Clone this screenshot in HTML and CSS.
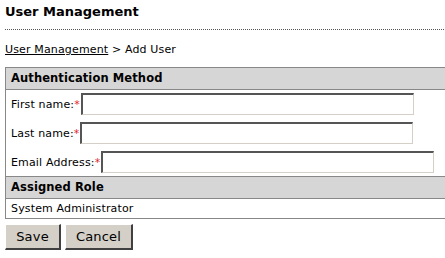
FILE: index.html
```html
<!DOCTYPE html>
<html lang="en">
<head>
    <meta charset="UTF-8">
    <title>User Management</title>
    <link rel="stylesheet" href="styles.css">
</head>
<body>
    <div class="page">
        <h1 class="title">User Management</h1>
        <div class="crumbs"><a href="#">User Management</a> &gt; Add User</div>
        <form class="form">
            <div class="section">
                <div class="section-head">Authentication Method</div>
                <div class="fields">
                    <div class="field">
                        <label for="first">First name:<span class="req">*</span></label>
                        <input type="text" id="first" class="input">
                    </div>
                    <div class="field">
                        <label for="last">Last name:<span class="req">*</span></label>
                        <input type="text" id="last" class="input">
                    </div>
                    <div class="field">
                        <label for="email">Email Address:<span class="req">*</span></label>
                        <input type="text" id="email" class="input">
                    </div>
                </div>
                <div class="section-head second">Assigned Role</div>
                <div class="role">System Administrator</div>
            </div>
            <div class="buttons">
                <button type="button" class="btn save">Save</button>
                <button type="button" class="btn cancel">Cancel</button>
            </div>
        </form>
    </div>
</body>
</html>
```

FILE: styles.css
```css
* {
    box-sizing: border-box;
    margin: 0;
    padding: 0;
}
html, body {
    overflow: hidden;
}
body {
    font-family: "DejaVu Sans", Verdana, sans-serif;
    font-size: 11px;
    letter-spacing: 0.15px;
    color: #000;
    background: #fff;
}
.page {
    width: 460px;
    padding: 0 0 0 5px;
}
.title {
    font-size: 13px;
    font-weight: bold;
    letter-spacing: 0;
    line-height: 16px;
    padding: 4px 0 9px;
    border-bottom: 1px dotted #555;
}
.crumbs {
    padding: 13px 0 0;
    line-height: 14px;
    height: 37px;
}
.crumbs a {
    color: #000;
}
.section {
    border: 1px solid #888;
    width: 460px;
}
.section-head {
    background: #d6d6d6;
    font-size: 11.5px;
    font-weight: bold;
    letter-spacing: 0.1px;
    line-height: 21px;
    padding: 0 5px;
    border-bottom: 1px solid #888;
}
.section-head.second {
    border-top: 1px solid #888;
}
.fields {
    display: flex;
    flex-direction: column;
    gap: 7px;
    padding: 3px 5px;
}
.field {
    display: flex;
    align-items: center;
}
.field label {
    white-space: nowrap;
    margin-right: 1px;
}
.req {
    color: #e0242a;
}
.input {
    width: 333px;
    height: 22px;
    border-style: solid;
    border-width: 2px 1px 1px 2px;
    border-color: #555 #d4d0c8 #d4d0c8 #555;
    outline: none;
    font: inherit;
}
.role {
    padding: 0 5px;
    line-height: 19px;
}
.buttons {
    display: flex;
    gap: 4px;
    padding-top: 5px;
}
.btn {
    font-family: "DejaVu Sans", Verdana, sans-serif;
    font-size: 13px;
    letter-spacing: 0.2px;
    height: 26px;
    background: #d4d0c8;
    border-style: solid;
    border-width: 1px 2px 2px 1px;
    border-color: #fff #404040 #404040 #fff;
    padding: 0;
}
.save {
    width: 56px;
}
.cancel {
    width: 68px;
}
```
